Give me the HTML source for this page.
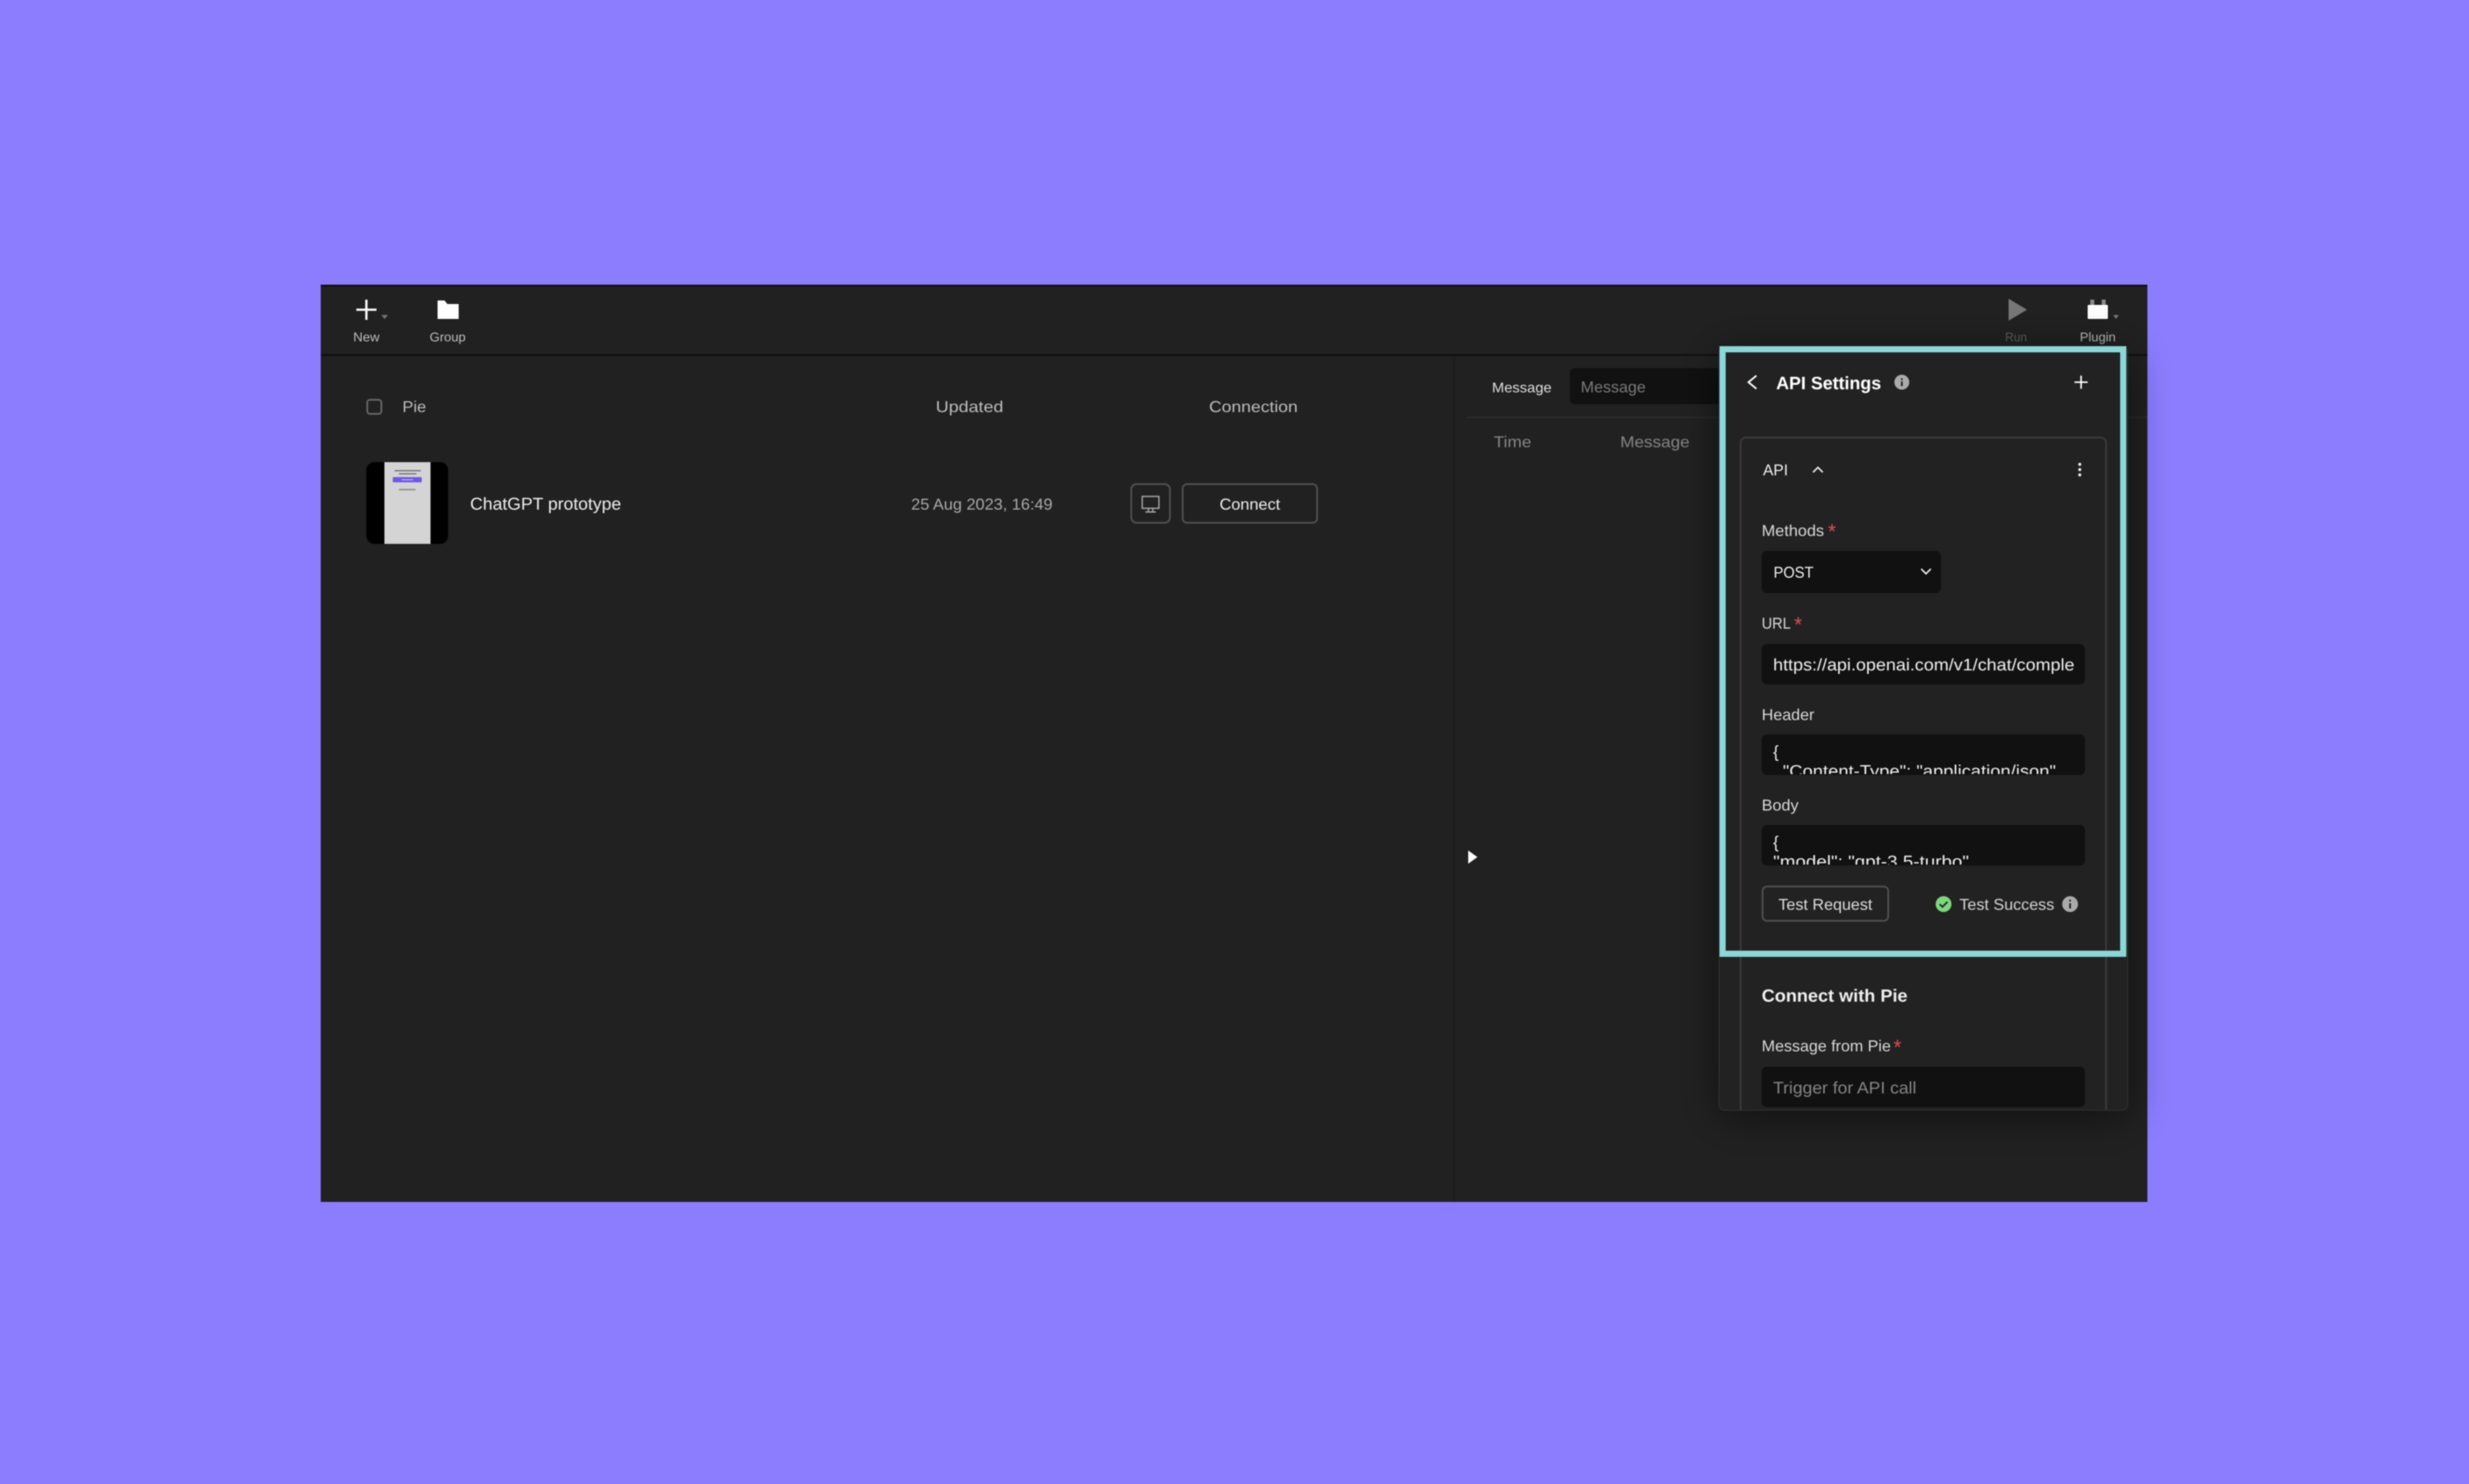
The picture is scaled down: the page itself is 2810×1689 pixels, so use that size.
<!DOCTYPE html>
<html><head><meta charset="utf-8"><title>API Settings</title>
<style>html,body{margin:0;padding:0;background:#8c7dff;width:2810px;height:1689px;overflow:hidden}svg{display:block;filter:blur(.45px)}
text{font-family:"Liberation Sans",sans-serif}</style></head><body>
<svg xmlns="http://www.w3.org/2000/svg" width="2810" height="1689" viewBox="0 0 2810 1689" text-rendering="geometricPrecision">
<defs>
<filter id="sh" x="-30%" y="-30%" width="160%" height="160%"><feDropShadow dx="0" dy="8" stdDeviation="24" flood-color="#000" flood-opacity=".5"/></filter>
<clipPath id="c1"><rect x="2005" y="836" width="368" height="45"/></clipPath>
<clipPath id="c2"><rect x="2005" y="939" width="368" height="45"/></clipPath>
<clipPath id="app"><rect x="365" y="324" width="2079" height="1044"/></clipPath>
<clipPath id="th"><rect x="417" y="526" width="93" height="93" rx="9"/></clipPath>
</defs>
<rect width="2810" height="1689" fill="#8c7dff"/>
<rect x="365" y="324" width="2079" height="1044" fill="#212121"/>
<rect x="365" y="324" width="2079" height="2" fill="#0d0d0d"/>
<rect x="365" y="403" width="2079" height="2" fill="#0f0f0f"/>
<rect x="1654" y="405" width="2" height="963" fill="#1a1a1a"/>
<rect x="1669" y="474" width="775" height="2" fill="#2a2a2a"/>

<!-- toolbar -->
<path d="M417 341v23M405.500 352.500h23" stroke="#fff" stroke-width="2.600" fill="none"/>
<path d="M434 358.500h7.500l-3.750 4.500z" fill="#777"/>
<text x="402" y="388.500" font-size="14.500" fill="#bdbdbd" textLength="30" lengthAdjust="spacingAndGlyphs">New</text>
<path d="M498 342h8l3 4h13v17h-24z" fill="#fff"/>
<text x="489" y="388.500" font-size="14.500" fill="#bdbdbd" textLength="41" lengthAdjust="spacingAndGlyphs">Group</text>
<path d="M2286 340l21 12.500-21 12.500z" fill="#777"/>
<text x="2282" y="388.500" font-size="14.500" fill="#5c5c5c" textLength="25" lengthAdjust="spacingAndGlyphs">Run</text>
<path d="M2379 341h4.500v6h-4.500zM2392 341h4.500v6h-4.500z" fill="#8a8a8a"/>
<rect x="2376" y="347" width="23" height="16" rx="1" fill="#fff"/>
<path d="M2405 358.500h6.500l-3.250 4.500z" fill="#777"/>
<text x="2367" y="388.500" font-size="14.500" fill="#bdbdbd" textLength="41" lengthAdjust="spacingAndGlyphs">Plugin</text>

<!-- table -->
<rect x="418" y="455" width="16" height="16" rx="3" fill="none" stroke="#666" stroke-width="2"/>
<text x="458" y="469" font-size="18" fill="#bdbdbd" textLength="27" lengthAdjust="spacingAndGlyphs">Pie</text>
<text x="1065" y="469" font-size="18" fill="#bdbdbd" textLength="77" lengthAdjust="spacingAndGlyphs">Updated</text>
<text x="1376" y="469" font-size="18" fill="#bdbdbd" textLength="101" lengthAdjust="spacingAndGlyphs">Connection</text>

<g clip-path="url(#th)">
<rect x="417" y="526" width="93" height="93" fill="#000"/>
<rect x="437.500" y="526" width="52.500" height="93" fill="#d4d4d4"/>
<rect x="449" y="535" width="30" height="1.500" fill="#777"/>
<rect x="454" y="538.500" width="20" height="1.500" fill="#777"/>
<rect x="447" y="543" width="33" height="6" rx="1" fill="#6f58e8"/>
<rect x="457" y="545.500" width="13" height="1" fill="#cfc8ff"/>
<rect x="454" y="556.500" width="19" height="1.500" fill="#888"/>
</g>
<text x="535" y="580" font-size="19.500" fill="#eeeeee" textLength="172" lengthAdjust="spacingAndGlyphs">ChatGPT prototype</text>
<text x="1037" y="580" font-size="18" fill="#a8a8a8" textLength="161" lengthAdjust="spacingAndGlyphs">25 Aug 2023, 16:49</text>

<rect x="1287.500" y="551" width="44" height="44" rx="6" fill="none" stroke="#505050" stroke-width="2"/>
<path d="M1300 565h19v13.500h-19zM1307 578.500v4M1312 578.500v4M1303.500 582.700h12" stroke="#a8a8a8" stroke-width="1.500" fill="none"/>
<rect x="1346" y="551" width="153" height="44" rx="5" fill="none" stroke="#505050" stroke-width="2"/>
<text x="1388" y="580" font-size="18" fill="#eeeeee" textLength="69" lengthAdjust="spacingAndGlyphs">Connect</text>

<!-- log -->
<text x="1698" y="446.500" font-size="16" fill="#dddddd" textLength="68" lengthAdjust="spacingAndGlyphs">Message</text>
<rect x="1786.500" y="419" width="220" height="41" rx="6" fill="#111"/>
<text x="1799" y="446.500" font-size="18" fill="#7a7a7a" textLength="74" lengthAdjust="spacingAndGlyphs">Message</text>
<text x="1700" y="509" font-size="18" fill="#858585" textLength="43" lengthAdjust="spacingAndGlyphs">Time</text>
<text x="1844" y="509" font-size="18" fill="#858585" textLength="79" lengthAdjust="spacingAndGlyphs">Message</text>
<path d="M1671 968l10.500 7.500-10.500 7.500z" fill="#fff"/>

<!-- panel -->
<rect x="1956.500" y="394.500" width="465" height="869" rx="6" fill="#212121" stroke="#303030" filter="url(#sh)"/>
<path d="M1981 1263V504a6 6 0 0 1 6-6h404a6 6 0 0 1 6 6v759" fill="none" stroke="#3a3a3a" stroke-width="2"/>

<path d="M1999 427.500l-9 7.500 9 7.500" fill="none" stroke="#fff" stroke-width="2"/>
<text x="2021.500" y="443" font-size="20.500" font-weight="700" fill="#ffffff" textLength="119.500" lengthAdjust="spacingAndGlyphs">API Settings</text>
<circle cx="2164.500" cy="435" r="8.500" fill="#aaaaaa"/>
<rect x="2163.500" y="434" width="2" height="5.500" fill="#222"/><rect x="2163.500" y="430.500" width="2" height="2" fill="#222"/>
<path d="M2368.500 427.500v15M2361 435h15" stroke="#fff" stroke-width="1.800" fill="none"/>

<text x="2006.500" y="541" font-size="18" fill="#eeeeee" textLength="28.500" lengthAdjust="spacingAndGlyphs">API</text>
<path d="M2063.500 537.500l5.500-5.500 5.500 5.500" fill="none" stroke="#eee" stroke-width="1.700"/>
<circle cx="2367" cy="528.500" r="1.700" fill="#eee"/><circle cx="2367" cy="534.500" r="1.700" fill="#eee"/><circle cx="2367" cy="540.500" r="1.700" fill="#eee"/>

<text x="2005" y="610" font-size="18" fill="#d8d8d8" textLength="71" lengthAdjust="spacingAndGlyphs">Methods</text>
<text x="2080.500" y="613" font-size="24" fill="#dc5050" textLength="9" lengthAdjust="spacingAndGlyphs">*</text>
<rect x="2005" y="627" width="204" height="48" rx="6" fill="#111"/>
<text x="2018.500" y="657.500" font-size="18" fill="#eeeeee" textLength="45.500" lengthAdjust="spacingAndGlyphs">POST</text>
<path d="M2186.500 647.500l5.500 5.500 5.500-5.500" fill="none" stroke="#eee" stroke-width="1.700"/>

<text x="2005" y="715.500" font-size="18" fill="#d8d8d8" textLength="33" lengthAdjust="spacingAndGlyphs">URL</text>
<text x="2042" y="719" font-size="24" fill="#dc5050" textLength="9" lengthAdjust="spacingAndGlyphs">*</text>
<rect x="2005" y="733" width="368" height="46" rx="6" fill="#111"/>
<text x="2018" y="763" font-size="19" fill="#eeeeee" textLength="343" lengthAdjust="spacingAndGlyphs">https://api.openai.com/v1/chat/comple</text>

<text x="2005" y="819.500" font-size="18" fill="#d8d8d8" textLength="60" lengthAdjust="spacingAndGlyphs">Header</text>
<rect x="2005" y="836" width="368" height="46" rx="6" fill="#111"/>
<g clip-path="url(#c1)">
<text x="2018" y="862" font-size="19" fill="#eeeeee">{</text>
<text x="2029" y="884" font-size="19" fill="#eeeeee" textLength="311" lengthAdjust="spacingAndGlyphs">"Content-Type": "application/json"</text>
</g>

<text x="2005" y="922.500" font-size="18" fill="#d8d8d8" textLength="42" lengthAdjust="spacingAndGlyphs">Body</text>
<rect x="2005" y="939" width="368" height="46" rx="6" fill="#111"/>
<g clip-path="url(#c2)">
<text x="2018" y="965" font-size="19" fill="#eeeeee">{</text>
<text x="2018" y="987" font-size="19" fill="#eeeeee" textLength="223" lengthAdjust="spacingAndGlyphs">"model": "gpt-3.5-turbo"</text>
</g>

<rect x="2006" y="1009" width="143" height="39" rx="5" fill="none" stroke="#505050" stroke-width="2"/>
<text x="2024" y="1035.500" font-size="18" fill="#dcdcdc" textLength="107" lengthAdjust="spacingAndGlyphs">Test Request</text>
<circle cx="2212" cy="1029" r="9" fill="#7fd67f"/>
<path d="M2207.500 1029l3.200 3.200 5.800-5.800" fill="none" stroke="#1c2a1c" stroke-width="1.900"/>
<text x="2230" y="1035.500" font-size="18" fill="#d4d4d4" textLength="108" lengthAdjust="spacingAndGlyphs">Test Success</text>
<circle cx="2356" cy="1029" r="9" fill="#aaaaaa"/>
<rect x="2355" y="1028" width="2" height="6" fill="#222"/><rect x="2355" y="1024" width="2" height="2" fill="#222"/>

<text x="2005" y="1140" font-size="20" font-weight="700" fill="#eeeeee" textLength="166" lengthAdjust="spacingAndGlyphs">Connect with Pie</text>
<text x="2005" y="1196.500" font-size="18" fill="#d8d8d8" textLength="147" lengthAdjust="spacingAndGlyphs">Message from Pie</text>
<text x="2155" y="1200" font-size="24" fill="#dc5050" textLength="9" lengthAdjust="spacingAndGlyphs">*</text>
<rect x="2005" y="1214" width="368" height="46" rx="6" fill="#111"/>
<text x="2018" y="1244.500" font-size="19" fill="#858585" textLength="163" lengthAdjust="spacingAndGlyphs">Trigger for API call</text>

<!-- highlight -->
<rect x="1960.500" y="397.500" width="456" height="688" fill="none" stroke="#8ad7d7" stroke-width="7"/>
</svg>
</body></html>
